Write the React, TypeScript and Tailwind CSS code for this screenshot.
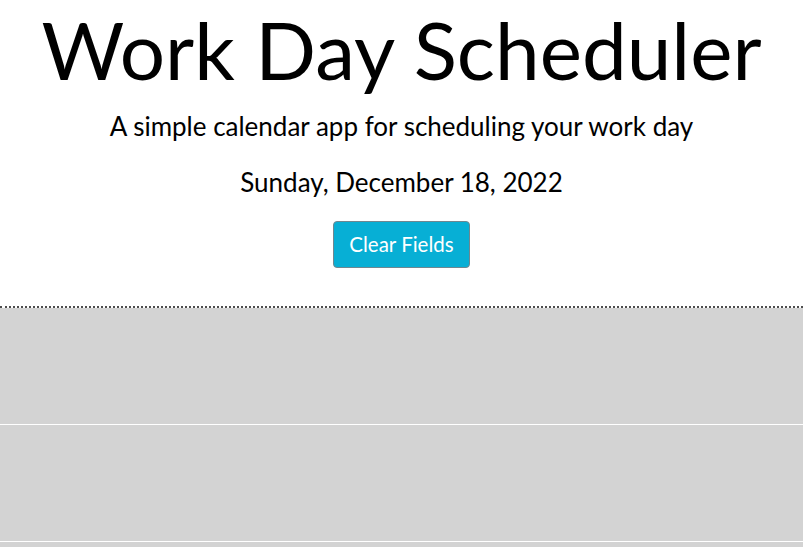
import React from 'react'

const hours = [9, 10, 11, 12, 13, 14, 15, 16, 17]

export default function App() {
  return (
    <div className="min-h-screen bg-white font-['Lato',sans-serif] text-black">
      <header className="flex flex-col items-center text-center">
        <h1 className="mt-[9px] text-[80px] leading-[80px]">Work Day Scheduler</h1>
        <p className="mt-[24px] text-[26px] leading-[26px]">
          A simple calendar app for scheduling your work day
        </p>
        <p className="mt-[30px] text-[26px] leading-[26px]">Sunday, December 18, 2022</p>
        <button
          type="button"
          className="mt-[26px] h-[47px] w-[137px] rounded-[4px] border border-[#6f8790] bg-[#07afd5] text-[20.5px] leading-none text-white"
        >
          Clear Fields
        </button>
      </header>

      <main className="mt-[38px] border-t-2 border-dotted border-[#4d4d4d]">
        {hours.map((h) => (
          <div key={h} className="h-[117px] border-b border-white bg-[#d3d3d3]" />
        ))}
      </main>
    </div>
  )
}
